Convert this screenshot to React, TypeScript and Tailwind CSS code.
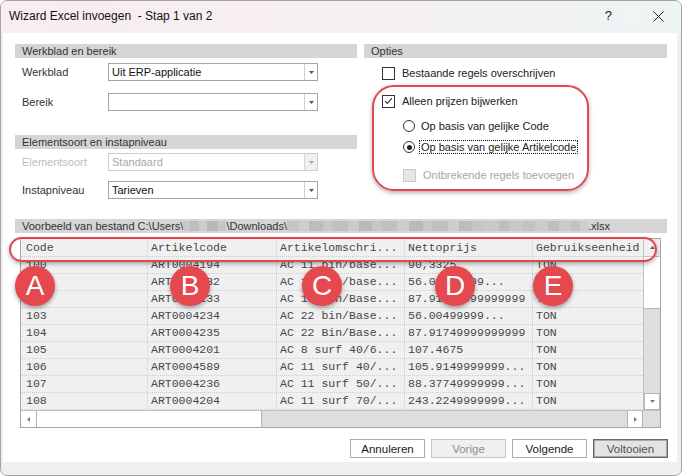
import React from "react";

const rows = [
  ["100", "ART0004194", "AC 11 bin/base...", "90,3325", "TON"],
  ["101", "ART0004232", "AC 16 bin/base...", "56.00499999...", "TON"],
  ["102", "ART0004233", "AC 16 bin/Base...", "87.91749999999999", "TON"],
  ["103", "ART0004234", "AC 22 bin/Base...", "56.00499999...", "TON"],
  ["104", "ART0004235", "AC 22 Bin/Base...", "87.91749999999999", "TON"],
  ["105", "ART0004201", "AC 8 surf 40/6...", "107.4675", "TON"],
  ["106", "ART0004589", "AC 11 surf 40/...", "105.9149999999...", "TON"],
  ["107", "ART0004236", "AC 11 surf 50/...", "88.37749999999...", "TON"],
  ["108", "ART0004204", "AC 11 surf 70/...", "243.2249999999...", "TON"],
];

const headers = ["Code", "Artikelcode", "Artikelomschri...", "Nettoprijs", "Gebruikseenheid"];

// blocks that stand in for the pixelated parts of the path
const blurA = ["w-[7px] bg-[#c9c9c9]", "w-[9px] bg-[#bdbdbd]", "w-[8px] bg-[#cccccc]", "w-[11px] bg-[#b8b8b8]", "w-[8px] bg-[#c6c6c6]"];
const blurB = [
  "w-[12px] bg-[#c4c4c4]", "w-[10px] bg-[#cdcdcd]", "w-[14px] bg-[#bcbcbc]", "w-[9px] bg-[#c8c8c8]",
  "w-[16px] bg-[#c0c0c0]", "w-[11px] bg-[#cbcbcb]", "w-[13px] bg-[#b9b9b9]", "w-[10px] bg-[#c6c6c6]",
  "w-[15px] bg-[#bfbfbf]", "w-[12px] bg-[#cccccc]", "w-[14px] bg-[#bababa]", "w-[9px] bg-[#c7c7c7]",
  "w-[16px] bg-[#c1c1c1]", "w-[11px] bg-[#cdcdcd]", "w-[13px] bg-[#bcbcbc]", "w-[12px] bg-[#c5c5c5]",
  "w-[15px] bg-[#c9c9c9]", "w-[10px] bg-[#bdbdbd]", "w-[14px] bg-[#c8c8c8]", "w-[12px] bg-[#c2c2c2]",
  "w-[13px] bg-[#cbcbcb]", "w-[11px] bg-[#bebebe]", "w-[12px] bg-[#cacaca]", "w-[9px] bg-[#c3c3c3]",
  "w-[8px] bg-[#cfcfcf]",
];

const Arrow = ({ dir, color = "#606060" }: { dir: "down" | "up" | "left" | "right"; color?: string }) => {
  const d = {
    down: "M0 0h5L2.5 3z",
    up: "M0 3h5L2.5 0z",
    left: "M3 0v5L0 2.5z",
    right: "M0 0v5L3 2.5z",
  }[dir];
  const vertical = dir === "down" || dir === "up";
  return (
    <svg width={vertical ? 5 : 3} height={vertical ? 3 : 5}>
      <path d={d} fill={color} />
    </svg>
  );
};

const Combo = ({ value, disabled }: { value: string; disabled?: boolean }) => (
  <div
    className={`w-[210px] h-[18px] flex bg-white border ${
      disabled ? "border-[#cccccc] text-[#a8a8a8]" : "border-[#a3a3a3] text-[#111111]"
    }`}
  >
    <div className="flex-1 pl-[3px] leading-[16px]">{value}</div>
    <div
      className={`w-[13px] flex items-center justify-center border-l ${
        disabled ? "border-[#d6d6d6] bg-[#f0f0f0]" : "border-[#d0d0d0]"
      }`}
    >
      <Arrow dir="down" color={disabled ? "#a8a8a8" : "#555555"} />
    </div>
  </div>
);

const Bar = ({ children }: { children: React.ReactNode }) => (
  <div className="h-[14px] bg-[#d5d5d5] pl-[7px] leading-[14px] text-[#333333] whitespace-nowrap flex items-center">
    {children}
  </div>
);

const Box = ({ checked, disabled }: { checked?: boolean; disabled?: boolean }) => (
  <span
    className={`w-[13px] h-[13px] flex items-center justify-center border ${
      disabled ? "border-[#cacaca] bg-[#e6e6e6]" : "border-[#333333] bg-white"
    }`}
  >
    {checked && (
      <svg width="9" height="8" viewBox="0 0 9 8">
        <path d="M1 4.2L3.3 6.5L8 1.2" stroke="#333" strokeWidth="1.2" fill="none" />
      </svg>
    )}
  </span>
);

const Radio = ({ checked }: { checked?: boolean }) => (
  <span className="w-[12px] h-[12px] rounded-full border border-[#333333] bg-white flex items-center justify-center">
    {checked && <span className="w-[5px] h-[5px] rounded-full bg-[#222222]" />}
  </span>
);

const gridCols = "grid grid-cols-[127px_129px_128px_128px_110px]";

const Cell = ({ text, i }: { text: string; i: number }) => (
  <div
    className={`h-full whitespace-nowrap overflow-hidden ${i === 0 ? "pl-[5px]" : "pl-[3px]"} ${
      i < 4 ? "border-r border-dotted border-[#cfcfcf]" : ""
    }`}
  >
    {text}
  </div>
);

const Badge = ({ letter, left }: { letter: string; left: string }) => (
  <div
    className={`absolute top-[266px] ${left} w-[40px] h-[40px] rounded-full bg-[#e5484f] text-white text-[28px] leading-none flex items-center justify-center shadow-[0_2px_4px_rgba(0,0,0,0.35)]`}
  >
    {letter}
  </div>
);

const Button = ({ label, kind }: { label: string; kind: "normal" | "disabled" | "default" }) => {
  const look =
    kind === "disabled"
      ? "bg-[#f0f0f0] border border-[#c6c6c6] text-[#8d8d8d]"
      : kind === "default"
      ? "bg-[#e3e3e3] border border-[#666666] shadow-[inset_0_0_0_1px_#a9a9a9] text-[#4f4f4f]"
      : "bg-white border border-[#adadad] text-[#1a1a1a]";
  return <button className={`w-[75px] h-[19px] leading-[16px] ${look}`}>{label}</button>;
};

export default function App() {
  return (
    <div className="relative w-[682px] h-[476px] overflow-hidden bg-white font-['Liberation_Sans',Arial,sans-serif] text-[11px]">
      <div className="w-full h-full flex flex-col border border-[#a4a4a4] rounded-[7px] overflow-hidden bg-[#f0f0f0]">
        {/* title bar */}
        <div className="h-[30px] shrink-0 flex items-center pl-[8px] bg-gradient-to-r from-[#f8edf0] via-[#f6eff1] to-[#eef5f5] text-[12px] text-[#111111]">
          <span className="whitespace-pre">Wizard Excel invoegen  - Stap 1 van 2</span>
          <span className="ml-auto mr-[41px] text-[13px] text-[#222222]">?</span>
          <svg width="11" height="11" viewBox="0 0 11 11" className="mr-[17px]">
            <path d="M0.5 0.5L10.5 10.5M10.5 0.5L0.5 10.5" stroke="#222" strokeWidth="1" />
          </svg>
        </div>

        {/* body */}
        <div className="flex-1 pt-[2px] pl-[2px] pr-[4px] pb-[13px]">
          <div className="h-full bg-white pl-[12px] pt-[11px] flex flex-col">
            <div className="flex items-start gap-[7px]">
              {/* left column */}
              <div className="w-[342px] flex flex-col">
                <Bar>Werkblad en bereik</Bar>
                <div className="flex items-center mt-[5px]">
                  <span className="w-[93px] pl-[7px] text-[#333333]">Werkblad</span>
                  <Combo value="Uit ERP-applicatie" />
                </div>
                <div className="flex items-center mt-[12px]">
                  <span className="w-[93px] pl-[7px] text-[#333333]">Bereik</span>
                  <Combo value="" />
                </div>
                <div className="mt-[24px]">
                  <Bar>Elementsoort en instapniveau</Bar>
                </div>
                <div className="flex items-center mt-[4px]">
                  <span className="w-[93px] pl-[7px] text-[#bdbdbd]">Elementsoort</span>
                  <Combo value="Standaard" disabled />
                </div>
                <div className="flex items-center mt-[10px]">
                  <span className="w-[93px] pl-[7px] text-[#333333]">Instapniveau</span>
                  <Combo value="Tarieven" />
                </div>
              </div>

              {/* right column */}
              <div className="w-[303px] flex flex-col text-[#222222]">
                <Bar>Opties</Bar>
                <div className="h-[14px] mt-[8px] pl-[18px] flex items-center gap-[7px]">
                  <Box />
                  <span>Bestaande regels overschrijven</span>
                </div>
                <div className="h-[14px] mt-[14px] pl-[18px] flex items-center gap-[7px]">
                  <Box checked />
                  <span>Alleen prijzen bijwerken</span>
                </div>
                <div className="h-[14px] mt-[11px] pl-[39px] flex items-center gap-[6px]">
                  <Radio />
                  <span>Op basis van gelijke Code</span>
                </div>
                <div className="h-[14px] mt-[7px] pl-[39px] flex items-center gap-[4px]">
                  <Radio checked />
                  <span className="border border-dotted border-[#111111] px-[1px] leading-[12px]">
                    Op basis van gelijke Artikelcode
                  </span>
                </div>
                <div className="h-[14px] mt-[14px] pl-[39px] flex items-center gap-[7px]">
                  <Box disabled />
                  <span className="text-[#a6a6a6]">Ontbrekende regels toevoegen</span>
                </div>
              </div>
            </div>

            {/* preview */}
            <div className="w-[652px] mt-[20px]">
              <Bar>
                <span>Voorbeeld van bestand C:\Users\</span>
                <span className="flex h-[10px]">
                  {blurA.map((c, i) => (
                    <span key={i} className={`h-full ${c}`} />
                  ))}
                </span>
                <span>\Downloads\</span>
                <span className="flex h-[10px]">
                  {blurB.map((c, i) => (
                    <span key={i} className={`h-full ${c}`} />
                  ))}
                </span>
                <span>.xlsx</span>
              </Bar>

              <div className="ml-[5px] mt-[5px] w-[641px] border border-[#a6a6a6] bg-[#f0f0f0] flex flex-col font-['Liberation_Mono','Courier_New',monospace] text-[11.5px] text-[#474747]">
                <div className="flex">
                  <div className="w-[622px]">
                    <div className={`${gridCols} h-[18px] leading-[18px] border-b border-dotted border-[#cfcfcf]`}>
                      {headers.map((h, i) => (
                        <Cell key={h} text={h} i={i} />
                      ))}
                    </div>
                    {rows.map((r) => (
                      <div key={r[0]} className={`${gridCols} h-[17px] leading-[16px] border-b border-dotted border-[#cfcfcf]`}>
                        {r.map((t, i) => (
                          <Cell key={i} text={t} i={i} />
                        ))}
                      </div>
                    ))}
                  </div>
                  <div className="w-[17px] flex flex-col bg-[#dedede] border-l border-[#c2c2c2]">
                    <div className="h-[18px] bg-[#f0f0f0] border-b border-[#c2c2c2] flex items-center justify-center">
                      <Arrow dir="up" />
                    </div>
                    <div className="h-[52px] bg-white border-b border-[#b4b4b4]" />
                    <div className="flex-1" />
                    <div className="h-[17px] bg-white border border-[#b4b4b4] flex items-center justify-center">
                      <Arrow dir="down" color="#7a7a7a" />
                    </div>
                  </div>
                </div>
                <div className="flex h-[17px] bg-[#dedede] border-t border-[#c2c2c2]">
                  <div className="w-[16px] bg-white border-r border-[#b4b4b4] flex items-center justify-center">
                    <Arrow dir="left" color="#7a7a7a" />
                  </div>
                  <div className="w-[225px] bg-white border-r border-[#b4b4b4]" />
                  <div className="flex-1" />
                  <div className="w-[16px] bg-white border-l border-r border-[#b4b4b4] flex items-center justify-center">
                    <Arrow dir="right" color="#7a7a7a" />
                  </div>
                  <div className="w-[17px]" />
                </div>
              </div>
            </div>

            {/* buttons */}
            <div className="mt-[11px] w-[653px] flex justify-end gap-[6px] text-[11.5px]">
              <Button label="Annuleren" kind="normal" />
              <Button label="Vorige" kind="disabled" />
              <Button label="Volgende" kind="normal" />
              <Button label="Voltooien" kind="default" />
            </div>
          </div>
        </div>
      </div>

      {/* annotations */}
      <div className="absolute left-[372px] top-[85px] w-[217px] h-[106px] rounded-[22px] border-[2.5px] border-[#e2474f] shadow-[0_2px_4px_rgba(0,0,0,0.3)]" />
      <div className="absolute left-[9px] top-[237px] w-[648px] h-[25px] rounded-full border-[2.5px] border-[#e2474f] shadow-[0_2px_4px_rgba(0,0,0,0.3)]" />
      <Badge letter="A" left="left-[15px]" />
      <Badge letter="B" left="left-[170px]" />
      <Badge letter="C" left="left-[302px]" />
      <Badge letter="D" left="left-[435px]" />
      <Badge letter="E" left="left-[533px]" />
    </div>
  );
}
